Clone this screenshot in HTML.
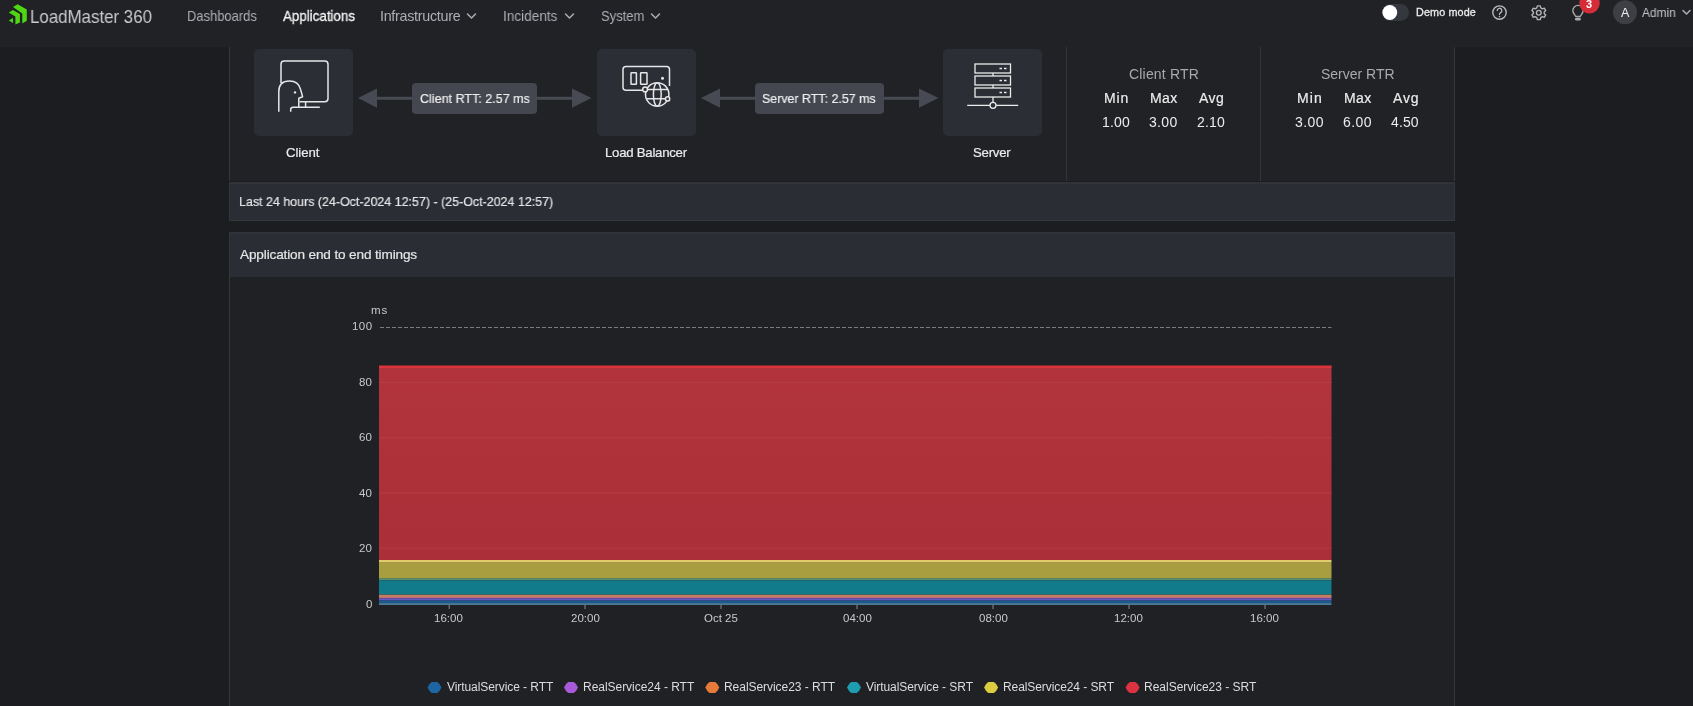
<!DOCTYPE html>
<html>
<head>
<meta charset="utf-8">
<style>
html,body{margin:0;padding:0;}
body{width:1693px;height:706px;overflow:hidden;background:#1c1d20;position:relative;font-family:"Liberation Sans",sans-serif;}
.b{position:absolute;}
.t{position:absolute;white-space:nowrap;line-height:1;font-family:"Liberation Sans",sans-serif;will-change:transform;}
svg{position:absolute;left:0;top:0;}
</style>
</head>
<body>
<!-- navbar -->
<div class="b" style="left:0;top:0;width:1693px;height:47px;background:#212226"></div>
<!-- top diagram panel -->
<div class="b" style="left:229px;top:47px;width:1224px;height:134px;background:#212226;border-left:1px solid #36373c;border-right:1px solid #36373c"></div>
<div class="b" style="left:1066px;top:47px;width:1px;height:134px;background:#33343a"></div>
<div class="b" style="left:1260px;top:47px;width:1px;height:134px;background:#33343a"></div>
<!-- icon boxes -->
<div class="b" style="left:254px;top:48.5px;width:99px;height:87.5px;background:#2c2e36;border-radius:5px"></div>
<div class="b" style="left:597px;top:48.5px;width:99px;height:87.5px;background:#2c2e36;border-radius:5px"></div>
<div class="b" style="left:943px;top:48.5px;width:99px;height:87.5px;background:#2c2e36;border-radius:5px"></div>
<!-- pills -->
<div class="b" style="left:412px;top:83px;width:125px;height:31px;background:#444750;border-radius:4px"></div>
<div class="b" style="left:755px;top:83px;width:129px;height:31px;background:#444750;border-radius:4px"></div>
<!-- last 24 bar -->
<div class="b" style="left:229px;top:181.5px;width:1224px;height:36px;background:#2b2d34;border:1px solid #36373c;border-top:2px solid #323338"></div>
<!-- chart header -->
<div class="b" style="left:229px;top:231.5px;width:1224px;height:43.5px;background:#2b2d34;border:1px solid #36373c;border-top:2px solid #323338"></div>
<!-- chart body -->
<div class="b" style="left:229px;top:277px;width:1224px;height:440px;background:#202124;border-left:1px solid #36373c;border-right:1px solid #36373c"></div>

<svg width="1693" height="706" viewBox="0 0 1693 706">
  <!-- logo -->
  <g fill="#4fd614">
    <polygon points="13,7 17.6,4.3 26.8,9.5 26.8,20.8 22.3,23.4 22.3,13.4"/>
    <polygon points="8.8,12.6 12.9,10.1 19.9,14.1 19.9,22.5 15.4,24.6 15.4,16.6"/>
    <polygon points="8.8,20.4 12.9,17.9 13.1,23.1"/>
  </g>
  <!-- chevrons nav -->
  <g fill="none" stroke="#adaeb5" stroke-width="1.5" stroke-linecap="round" stroke-linejoin="round">
    <polyline points="467.5,14 471.5,18 475.5,14"/>
    <polyline points="565.5,14 569.5,18 573.5,14"/>
    <polyline points="651.5,14 655.5,18 659.5,14"/>
    <polyline points="1683,10.5 1686.5,14 1690,10.5"/>
  </g>
  <!-- toggle -->
  <rect x="1382" y="4" width="27" height="17" rx="8.5" fill="#35373e"/>
  <circle cx="1389.8" cy="12.5" r="7.4" fill="#ffffff"/>
  <!-- help -->
  <circle cx="1499.5" cy="12.6" r="6.7" fill="none" stroke="#b9b9bb" stroke-width="1.4"/>
  <path d="M1497.2,10.6 a2.3,2.3 0 1 1 3.4,2 c-0.8,0.5 -1.1,0.9 -1.1,1.8" fill="none" stroke="#b9b9bb" stroke-width="1.3" stroke-linecap="round"/>
  <circle cx="1499.5" cy="16.6" r="0.8" fill="#b9b9bb"/>
  <!-- gear -->
  <g transform="translate(1538.8,12.75) scale(0.9)" fill="none" stroke="#b4b4b8" stroke-width="1.55" stroke-linejoin="round">
    <path d="M-1.6,-7.6 L1.6,-7.6 L2.2,-5.4 L4.0,-4.4 L6.1,-5.1 L7.7,-2.4 L6.0,-0.9 L6.0,0.9 L7.7,2.4 L6.1,5.1 L4.0,4.4 L2.2,5.4 L1.6,7.6 L-1.6,7.6 L-2.2,5.4 L-4.0,4.4 L-6.1,5.1 L-7.7,2.4 L-6.0,0.9 L-6.0,-0.9 L-7.7,-2.4 L-6.1,-5.1 L-4.0,-4.4 L-2.2,-5.4 Z"/>
    <circle cx="0" cy="0" r="2.6"/>
  </g>
  <!-- bulb -->
  <g fill="none" stroke="#a9a9ab" stroke-width="1.4" stroke-linecap="round" stroke-linejoin="round">
    <path d="M1575.8,16.5 C1574.8,14.5 1572.8,13 1572.8,10.6 A5.2,5.2 0 0 1 1583.2,10.6 C1583.2,13 1581.2,14.5 1580.2,16.5 Z"/>
  </g>
  <rect x="1575" y="17.8" width="5.8" height="2.6" rx="1.2" fill="#a9a9ab"/>
  <circle cx="1589.5" cy="3.3" r="10.2" fill="#d42d37"/>
  <!-- avatar -->
  <circle cx="1625" cy="12.3" r="12" fill="#3d3f45"/>

  <!-- diagram arrows -->
  <g fill="#484a53">
    <polygon points="358,98 377,88.5 377,107.7"/>
    <rect x="376" y="96.8" width="37" height="3"/>
    <rect x="536" y="96.8" width="37" height="3"/>
    <polygon points="591.5,98 572,88.5 572,107.7"/>
    <polygon points="701,98 720,88.5 720,107.7"/>
    <rect x="719" y="96.8" width="37" height="3"/>
    <rect x="883" y="96.8" width="37" height="3"/>
    <polygon points="938.5,98 919,88.5 919,107.7"/>
  </g>

  <!-- client icon -->
  <g fill="none" stroke="#e6e6e8" stroke-width="1.5" stroke-linecap="butt" stroke-linejoin="round">
    <path d="M281,83 L281,64.2 Q281,61 284.2,61 L324.8,61 Q328,61 328,64.2 L328,98.6 Q328,101.8 324.8,101.8 L299.5,101.8"/>
    <path d="M278.8,111.8 L278.8,91.5 Q278.8,81 289.5,81 Q298.5,81 300.6,89.5 L302.6,96.8 L298.8,98.3 L298.8,107.3"/>
    <path d="M290.7,111.8 L290.7,109.6 Q290.7,107.3 293,107.3 L319.8,107.3 M305.6,101.8 L305.6,107.3"/>
  </g>
  <circle cx="295" cy="92.4" r="1.2" fill="#e6e6e8"/>

  <!-- LB icon -->
  <g fill="none" stroke="#e6e6e8" stroke-width="1.5">
    <path d="M644,90.3 L626,90.3 Q623,90.3 623,87.3 L623,69.5 Q623,66.5 626,66.5 L666.5,66.5 Q669.5,66.5 669.5,69.5 L669.5,86"/>
    <rect x="631" y="72.8" width="5.4" height="11.5" rx="0.5"/>
    <rect x="640.6" y="72.8" width="6.4" height="11.5" rx="0.5"/>
    <circle cx="657.2" cy="94.4" r="11.7" fill="#2c2e36"/>
    <ellipse cx="657.3" cy="94.4" rx="3.9" ry="11.7"/>
    <path d="M647,89.6 L667.4,89.6 M647,98.7 L667.4,98.7"/>
    <circle cx="645.1" cy="89.4" r="2.4" fill="#2c2e36"/>
    <circle cx="667.6" cy="98.9" r="2.1" fill="#2c2e36"/>
  </g>
  <circle cx="662.5" cy="78.3" r="1.5" fill="#e6e6e8"/>

  <!-- server icon -->
  <g fill="none" stroke="#ececec" stroke-width="1.3">
    <rect x="975" y="64" width="35.5" height="9"/>
    <rect x="975" y="76" width="35.5" height="9"/>
    <rect x="975" y="88" width="35.5" height="9"/>
    <path d="M993,73 L993,76 M993,85 L993,88 M993,97 L993,102.3 M967.2,105.3 L990,105.3 M996,105.3 L1018.2,105.3"/>
    <circle cx="993" cy="105.3" r="3"/>
    <path d="M999.5,68.5 L1002,68.5 M1004,68.5 L1006.5,68.5 M999.5,80.5 L1002,80.5 M1004,80.5 L1006.5,80.5 M999.5,92.5 L1002,92.5 M1004,92.5 L1006.5,92.5"/>
  </g>

  <!-- chart -->
  <line x1="380" y1="327.5" x2="1331.5" y2="327.5" stroke="#7a7a7e" stroke-width="1" stroke-dasharray="4,2"/>
  <defs><linearGradient id="rg" x1="0" y1="0" x2="0" y2="1"><stop offset="0" stop-color="#b2333c"/><stop offset="1" stop-color="#aa2f38"/></linearGradient></defs>
  <rect x="379" y="366" width="952.5" height="194" fill="url(#rg)"/>
  <rect x="379" y="365.5" width="952.5" height="2.5" fill="#dc333d"/>
  <g stroke="#b43c45" stroke-width="1">
    <line x1="379" y1="382.5" x2="1331.5" y2="382.5"/>
    <line x1="379" y1="437.7" x2="1331.5" y2="437.7"/>
    <line x1="379" y1="492.9" x2="1331.5" y2="492.9"/>
    <line x1="379" y1="548.2" x2="1331.5" y2="548.2"/>
  </g>
  <rect x="379" y="560" width="952.5" height="2.7" fill="#e2cc6a"/>
  <rect x="379" y="562.7" width="952.5" height="15.4" fill="#a89e40"/>
  <rect x="379" y="578.1" width="952.5" height="2.2" fill="#5a8e6a"/>
  <rect x="379" y="580.3" width="952.5" height="13.7" fill="#117a8b"/>
  <rect x="379" y="594" width="952.5" height="0.8" fill="#2e6a6e"/>
  <rect x="379" y="594.8" width="952.5" height="2.2" fill="#c27e62"/>
  <rect x="379" y="597" width="952.5" height="1.3" fill="#c66a7a"/>
  <rect x="379" y="598.3" width="952.5" height="2.2" fill="#6858c4"/>
  <rect x="379" y="600.5" width="952.5" height="2.6" fill="#1c5a8e"/>
  <rect x="379" y="603.1" width="952.5" height="1.9" fill="#4a7c9a"/>
  <g stroke="#8d8d90" stroke-width="1">
    <line x1="449.2" y1="605" x2="449.2" y2="609"/>
    <line x1="585" y1="605" x2="585" y2="609"/>
    <line x1="721" y1="605" x2="721" y2="609"/>
    <line x1="857" y1="605" x2="857" y2="609"/>
    <line x1="993" y1="605" x2="993" y2="609"/>
    <line x1="1129" y1="605" x2="1129" y2="609"/>
    <line x1="1265" y1="605" x2="1265" y2="609"/>
  </g>
  <!-- legend markers -->
  <g>
    <polygon points="427.5,687.5 429.5,683.9 431.7,681.9 437.3,681.9 439.5,683.9 441.5,687.5 439.5,691.1 437.3,693.1 431.7,693.1 429.5,691.1" fill="#1b66a3"/>
    <polygon points="564.0,687.5 566.0,683.9 568.2,681.9 573.8,681.9 576.0,683.9 578.0,687.5 576.0,691.1 573.8,693.1 568.2,693.1 566.0,691.1" fill="#a85ad8"/>
    <polygon points="705.3,687.5 707.3,683.9 709.5,681.9 715.1,681.9 717.3,683.9 719.3,687.5 717.3,691.1 715.1,693.1 709.5,693.1 707.3,691.1" fill="#e57b3a"/>
    <polygon points="847.0,687.5 849.0,683.9 851.2,681.9 856.8,681.9 859.0,683.9 861.0,687.5 859.0,691.1 856.8,693.1 851.2,693.1 849.0,691.1" fill="#1f9db0"/>
    <polygon points="984.1,687.5 986.1,683.9 988.3,681.9 993.9,681.9 996.1,683.9 998.1,687.5 996.1,691.1 993.9,693.1 988.3,693.1 986.1,691.1" fill="#dccc42"/>
    <polygon points="1125.6,687.5 1127.6,683.9 1129.8,681.9 1135.4,681.9 1137.6,683.9 1139.6,687.5 1137.6,691.1 1135.4,693.1 1129.8,693.1 1127.6,691.1" fill="#db3342"/>
  </g>
</svg>
<div class="t" style="left:30.31px;top:7.20px;font-size:19px;font-weight:400;color:#cbcbcd;transform:scaleX(0.8882);transform-origin:0 0">LoadMaster 360</div>
<div class="t" style="left:186.89px;top:9.00px;font-size:14.3px;font-weight:400;color:#adaeb5;transform:scaleX(0.9053);transform-origin:0 0">Dashboards</div>
<div class="t" style="left:282.80px;top:9.00px;font-size:14.3px;font-weight:400;color:#f2f2f2;transform:scaleX(0.9338);transform-origin:0 0;-webkit-text-stroke:0.3px #f2f2f2">Applications</div>
<div class="t" style="left:380.00px;top:9.00px;font-size:14.3px;font-weight:400;color:#adaeb5;letter-spacing:-0.277px">Infrastructure</div>
<div class="t" style="left:503.35px;top:9.00px;font-size:14.3px;font-weight:400;color:#adaeb5;transform:scaleX(0.9500);transform-origin:0 0">Incidents</div>
<div class="t" style="left:601.09px;top:9.00px;font-size:14.3px;font-weight:400;color:#adaeb5;transform:scaleX(0.9087);transform-origin:0 0">System</div>
<div class="t" style="left:1416.00px;top:6.60px;font-size:10.8px;font-weight:400;color:#ececec;letter-spacing:0.125px;-webkit-text-stroke:0.3px #ececec">Demo mode</div>
<div class="t" style="left:1642.40px;top:6.60px;font-size:12.4px;font-weight:400;color:#c4c4c6;transform:scaleX(0.9600);transform-origin:0 0">Admin</div>
<div class="t" style="left:286.40px;top:145.90px;font-size:13.2px;font-weight:400;color:#ececec;letter-spacing:-0.08px;-webkit-text-stroke:0.2px #ececec">Client</div>
<div class="t" style="left:604.60px;top:145.90px;font-size:13.2px;font-weight:400;color:#ececec;letter-spacing:-0.25px;-webkit-text-stroke:0.2px #ececec">Load Balancer</div>
<div class="t" style="left:973.00px;top:145.90px;font-size:13.2px;font-weight:400;color:#ececec;letter-spacing:-0.24px;-webkit-text-stroke:0.2px #ececec">Server</div>
<div class="t" style="left:420.00px;top:92.20px;font-size:13.3px;font-weight:400;color:#f0f0f0;transform:scaleX(0.9431);transform-origin:0 0;-webkit-text-stroke:0.2px #f0f0f0">Client RTT: 2.57 ms</div>
<div class="t" style="left:762.07px;top:92.20px;font-size:13.3px;font-weight:400;color:#f0f0f0;transform:scaleX(0.9339);transform-origin:0 0;-webkit-text-stroke:0.2px #f0f0f0">Server RTT: 2.57 ms</div>
<div class="t" style="left:1128.80px;top:66.50px;font-size:14px;font-weight:400;color:#a9a9ae;letter-spacing:0.189px">Client RTR</div>
<div class="t" style="left:1320.70px;top:66.60px;font-size:14px;font-weight:400;color:#a9a9ae;letter-spacing:-0.011px">Server RTR</div>
<div class="t" style="left:1103.60px;top:91.20px;font-size:14px;font-weight:400;color:#ececec;letter-spacing:0.9px;-webkit-text-stroke:0.2px #ececec">Min</div>
<div class="t" style="left:1149.90px;top:91.20px;font-size:14px;font-weight:400;color:#ececec;letter-spacing:0.45px;-webkit-text-stroke:0.2px #ececec">Max</div>
<div class="t" style="left:1199.00px;top:91.20px;font-size:14px;font-weight:400;color:#ececec;letter-spacing:0.5px;-webkit-text-stroke:0.2px #ececec">Avg</div>
<div class="t" style="left:1297.00px;top:91.20px;font-size:14px;font-weight:400;color:#ececec;letter-spacing:1.15px;-webkit-text-stroke:0.2px #ececec">Min</div>
<div class="t" style="left:1343.50px;top:91.20px;font-size:14px;font-weight:400;color:#ececec;letter-spacing:0.4px;-webkit-text-stroke:0.2px #ececec">Max</div>
<div class="t" style="left:1392.60px;top:91.20px;font-size:14px;font-weight:400;color:#ececec;letter-spacing:0.8px;-webkit-text-stroke:0.2px #ececec">Avg</div>
<div class="t" style="left:1102.00px;top:114.60px;font-size:14px;font-weight:400;color:#ececec;letter-spacing:0.2px">1.00</div>
<div class="t" style="left:1149.00px;top:114.60px;font-size:14px;font-weight:400;color:#ececec;letter-spacing:0.333px">3.00</div>
<div class="t" style="left:1196.90px;top:114.60px;font-size:14px;font-weight:400;color:#ececec;letter-spacing:0.167px">2.10</div>
<div class="t" style="left:1294.90px;top:114.60px;font-size:14px;font-weight:400;color:#ececec;letter-spacing:0.433px">3.00</div>
<div class="t" style="left:1342.60px;top:114.60px;font-size:14px;font-weight:400;color:#ececec;letter-spacing:0.467px">6.00</div>
<div class="t" style="left:1391.00px;top:114.60px;font-size:14px;font-weight:400;color:#ececec;letter-spacing:0.133px">4.50</div>
<div class="t" style="left:239.37px;top:195.00px;font-size:13.4px;font-weight:400;color:#e6e6e8;transform:scaleX(0.9297);transform-origin:0 0;-webkit-text-stroke:0.2px #e6e6e8">Last 24 hours (24-Oct-2024 12:57) - (25-Oct-2024 12:57)</div>
<div class="t" style="left:240.00px;top:247.70px;font-size:13.6px;font-weight:400;color:#e6e6e8;letter-spacing:-0.145px;-webkit-text-stroke:0.2px #e6e6e8">Application end to end timings</div>
<div class="t" style="left:370.90px;top:305.00px;font-size:11.5px;font-weight:400;color:#c9c9cb;letter-spacing:0.8px">ms</div>
<div class="t" style="left:352.00px;top:321.10px;font-size:11.5px;font-weight:400;color:#c9c9cb;letter-spacing:0.45px">100</div>
<div class="t" style="left:446.80px;top:681.00px;font-size:12px;font-weight:400;color:#dcdcde;letter-spacing:-0.068px">VirtualService - RTT</div>
<div class="t" style="left:582.80px;top:681.00px;font-size:12px;font-weight:400;color:#dcdcde;letter-spacing:-0.033px">RealService24 - RTT</div>
<div class="t" style="left:723.70px;top:681.00px;font-size:12px;font-weight:400;color:#dcdcde;letter-spacing:-0.044px">RealService23 - RTT</div>
<div class="t" style="left:865.90px;top:681.00px;font-size:12px;font-weight:400;color:#dcdcde;letter-spacing:-0.068px">VirtualService - SRT</div>
<div class="t" style="left:1002.80px;top:681.00px;font-size:12px;font-weight:400;color:#dcdcde;letter-spacing:-0.083px">RealService24 - SRT</div>
<div class="t" style="left:1143.80px;top:681.00px;font-size:12px;font-weight:400;color:#dcdcde;letter-spacing:-0.011px">RealService23 - SRT</div>
<div class="t" style="left:358.90px;top:376.70px;font-size:11.5px;font-weight:400;color:#c9c9cb;letter-spacing:0px">80</div>
<div class="t" style="left:358.90px;top:432.10px;font-size:11.5px;font-weight:400;color:#c9c9cb;letter-spacing:0px">60</div>
<div class="t" style="left:358.90px;top:487.60px;font-size:11.5px;font-weight:400;color:#c9c9cb;letter-spacing:0px">40</div>
<div class="t" style="left:358.90px;top:543.10px;font-size:11.5px;font-weight:400;color:#c9c9cb;letter-spacing:0px">20</div>
<div class="t" style="left:365.90px;top:598.50px;font-size:11.5px;font-weight:400;color:#c9c9cb;letter-spacing:0px">0</div>
<div class="t" style="left:434.20px;top:612.50px;font-size:11.5px;font-weight:400;color:#c9c9cb;letter-spacing:0px">16:00</div>
<div class="t" style="left:570.50px;top:612.50px;font-size:11.5px;font-weight:400;color:#c9c9cb;letter-spacing:0px">20:00</div>
<div class="t" style="left:704.00px;top:612.50px;font-size:11.5px;font-weight:400;color:#c9c9cb;letter-spacing:0px">Oct 25</div>
<div class="t" style="left:842.50px;top:612.50px;font-size:11.5px;font-weight:400;color:#c9c9cb;letter-spacing:0px">04:00</div>
<div class="t" style="left:978.50px;top:612.50px;font-size:11.5px;font-weight:400;color:#c9c9cb;letter-spacing:0px">08:00</div>
<div class="t" style="left:1114.00px;top:612.50px;font-size:11.5px;font-weight:400;color:#c9c9cb;letter-spacing:0px">12:00</div>
<div class="t" style="left:1250.00px;top:612.50px;font-size:11.5px;font-weight:400;color:#c9c9cb;letter-spacing:0px">16:00</div>
<div class="t" style="left:1585.5px;top:-1.5px;font-size:11px;font-weight:700;color:#fff">3</div>
<div class="t" style="left:1620.5px;top:7px;font-size:12.5px;font-weight:400;color:#f0f0f0">A</div>
</body>
</html>
